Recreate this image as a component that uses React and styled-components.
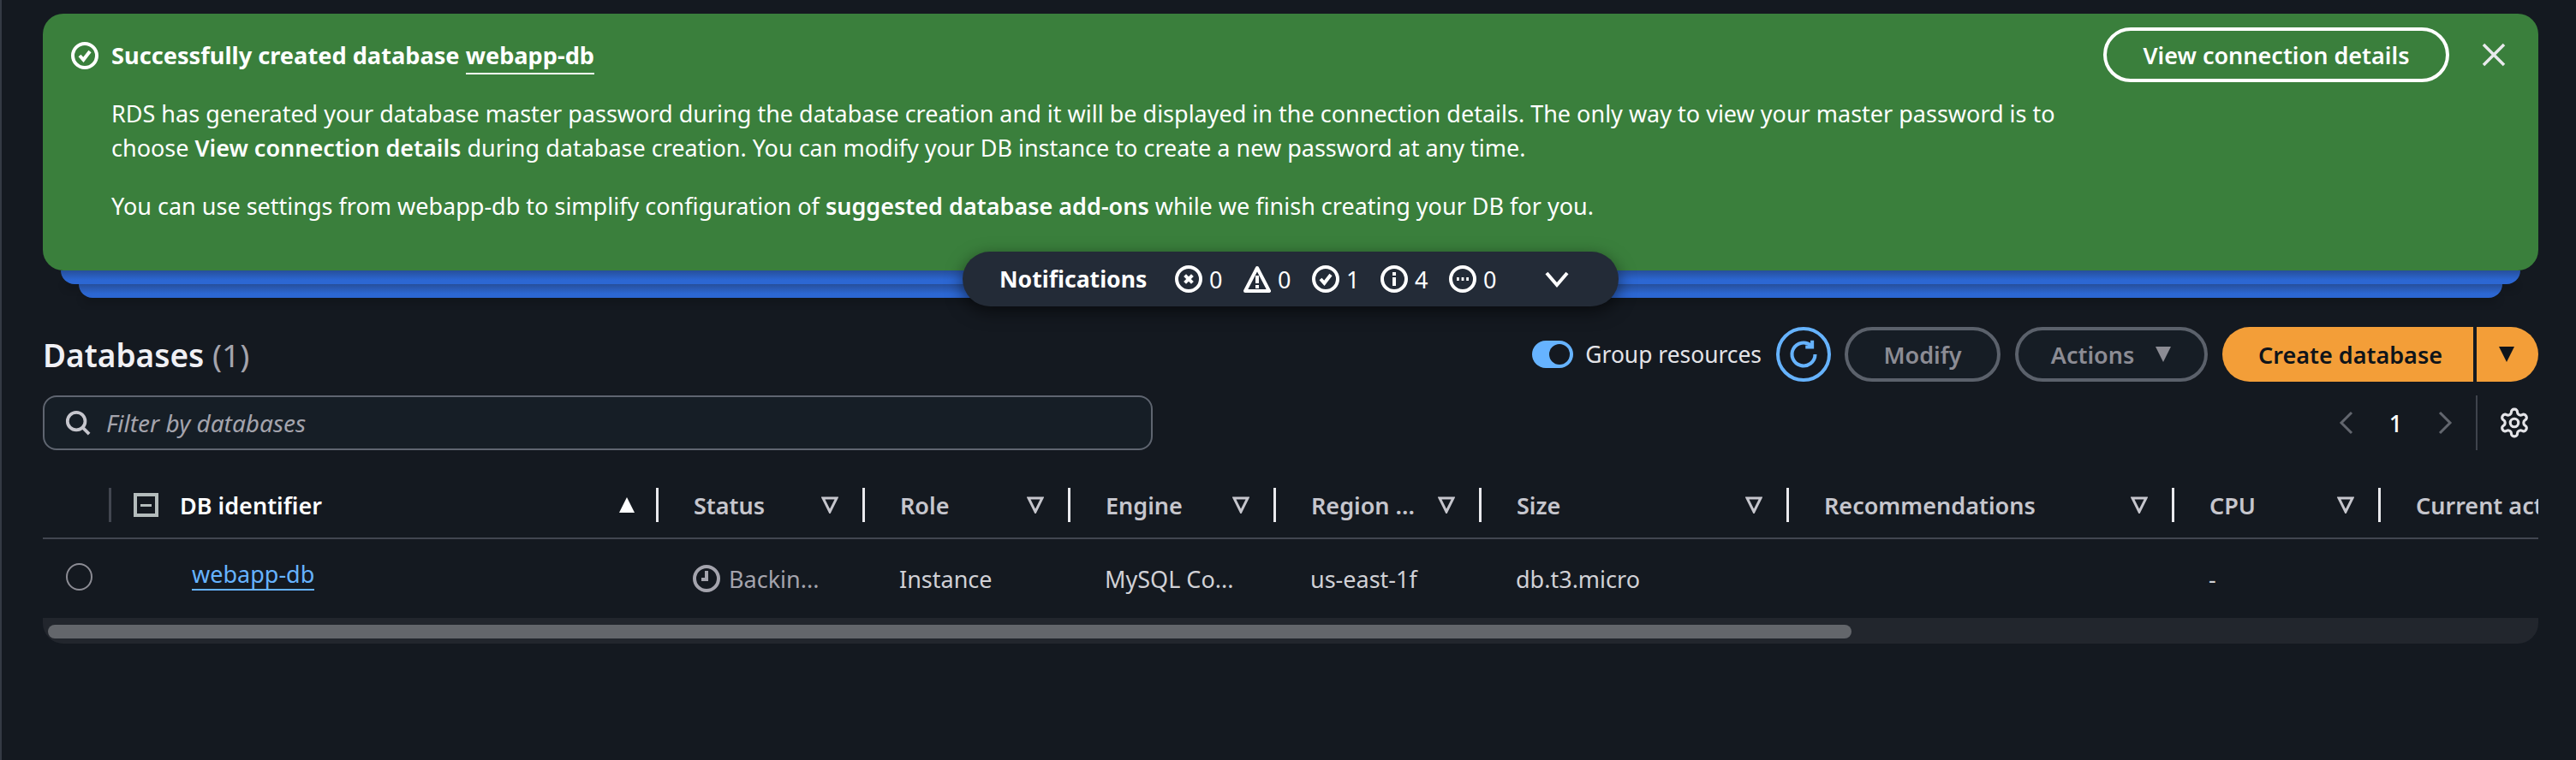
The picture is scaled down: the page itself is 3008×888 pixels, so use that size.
import React from 'react';
import styled, { createGlobalStyle } from 'styled-components';

const GlobalStyle = createGlobalStyle`
  html, body {
    margin: 0;
    background: #141920;
  }
  body {
    font-family: "Noto Sans", "Open Sans", sans-serif;
    font-size: 27px;
    color: #fff;
  }
  * { box-sizing: border-box; }
  b { font-weight: 600; }
`

const Page = styled.div`
  width: 3008px;
  height: 888px;
  overflow: hidden;
  padding: 16px 44px 0 48px;
  border-left: 2px solid #343a44;
  background: #141920;
`
const FlashStack = styled.div`
  position: relative;
`
const Banner = styled.div`
  height: 300px;
  padding: 16px 38px 0 33px;
  display: flex;
  justify-content: space-between;
  background: #3a7f3c;
  border-radius: 24px;
  position: relative;
`
const BannerMain = styled.div`
  display: flex;
  gap: 15px;
  padding-top: 17px;
`
const BannerBody = styled.div`
  width: 2300px;
`
const BannerTitle = styled.div`
  font-size: 27.2px;
  font-weight: 700;
  line-height: 32px;
  margin-bottom: 32px;
`
const TitleLink = styled.span`
  border-bottom: 2px solid #fff;
  padding-bottom: 2px;
`
const BannerText = styled.p`
  margin: 0 0 28px;
  line-height: 40px;
`
const BannerActions = styled.div`
  display: flex;
  align-items: flex-start;
  gap: 38px;
`
const OutlineButton = styled.div`
  width: 404px;
  height: 64px;
  border: 4px solid #fff;
  border-radius: 32px;
  display: flex;
  align-items: center;
  justify-content: center;
  font-weight: 600;
`
const CloseIcon = styled.svg`
  width: 28px;
  height: 28px;
  margin-top: 18px;
  color: #e9e9ed;
`
const StackLayer = styled.div`
  height: 16px;
  margin: 0 ${p => p.$inset}px;
  border-radius: 0 0 16px 16px;
  background: linear-gradient(#264f9b, #2c67d3 70%);
  box-shadow: 0 10px 10px -6px rgba(0, 0, 0, 0.35);
`
const NotificationBar = styled.div`
  position: absolute;
  top: 278px;
  left: 50%;
  transform: translateX(-50%);
  width: 766px;
  height: 64px;
  padding-left: 43px;
  display: flex;
  align-items: center;
  background: #232b37;
  border-radius: 32px;
  box-shadow: 0 6px 20px rgba(0, 0, 0, 0.55);
`
const NotificationLabel = styled.span`
  font-size: 26.6px;
  font-weight: 700;
  width: 205px;
  white-space: nowrap;
`
const Counter = styled.span`
  display: flex;
  align-items: center;
  gap: 8px;
  width: 80px;
`
const ExpandIcon = styled.svg`
  width: 28px;
  height: 28px;
`
const Spacer = styled.span`
  width: 32px;
`
const Toolbar = styled.div`
  margin-top: 34px;
  height: 64px;
  display: flex;
  align-items: center;
`
const Heading = styled.h2`
  margin: 0 auto 0 0;
  font-size: 37px;
  font-weight: 600;
  color: #f0f0f4;
`
const HeadingCount = styled.span`
  font-weight: 400;
  color: #a4a4ad;
`
const Toggle = styled.span`
  width: 48px;
  height: 32px;
  border-radius: 16px;
  background: #66b3ff;
  display: flex;
  align-items: center;
  justify-content: flex-end;
  padding-right: 4px;
`
const ToggleKnob = styled.span`
  width: 24px;
  height: 24px;
  border-radius: 50%;
  background: #141920;
`
const ToggleLabel = styled.span`
  margin: 0 17px 0 14px;
  color: #e4e4e8;
  font-size: 26.4px;
`
const RoundButton = styled.div`
  width: 64px;
  height: 64px;
  border: 4px solid #66b3ff;
  border-radius: 50%;
  display: flex;
  align-items: center;
  justify-content: center;
  color: #66b3ff;
  margin-right: 16px;
`
const DisabledButton = styled.div`
  width: ${p => p.$width}px;
  height: 64px;
  margin-right: 17px;
  border: 4px solid #5b616b;
  border-radius: 32px;
  display: flex;
  align-items: center;
  justify-content: center;
  gap: 24px;
  color: #8c8c94;
  font-weight: 600;
  background: #161d25;
`
const SplitButton = styled.div`
  width: 369px;
  height: 64px;
  display: flex;
  color: #0f141a;
  font-weight: 600;
`
const SplitMain = styled.div`
  width: 293px;
  padding-left: 6px;
  background: #f39e38;
  border-radius: 32px 0 0 32px;
  display: flex;
  align-items: center;
  justify-content: center;
`
const SplitArrow = styled.div`
  flex: 1;
  margin-left: 4px;
  padding-right: 2px;
  background: #f39e38;
  border-radius: 0 32px 32px 0;
  display: flex;
  align-items: center;
  justify-content: center;
`
const FilterRow = styled.div`
  margin-top: 16px;
  height: 64px;
  display: flex;
  align-items: center;
  justify-content: space-between;
`
const FilterInput = styled.div`
  width: 1296px;
  height: 64px;
  border: 2px solid #5f6570;
  border-radius: 16px;
  background: #161e26;
  padding-left: 24px;
  display: flex;
  align-items: center;
  gap: 18px;
  color: #a4a4ad;
  font-size: 28px;
  font-style: italic;
`
const Pager = styled.div`
  display: flex;
  align-items: center;
  height: 64px;
  margin-right: 9px;
`
const PagerArrow = styled.svg`
  width: 20px;
  height: 28px;
  color: #62666e;
`
const PageNumber = styled.span`
  width: 95px;
  text-align: center;
  font-weight: 500;
`
const PagerSplit = styled.span`
  width: 2px;
  height: 64px;
  margin: 0 24px 0 26px;
  background: #3f444d;
`
const Table = styled.div`
  margin-top: 44px;
  overflow: hidden;
`
const Row = styled.div`
  display: grid;
  grid-template-columns: 80px 639px 241px 240px 240px 240px 359px 450px 241px 400px;
  width: 2914px;
`
const HeadRow = styled(Row)`
  height: 60px;
  border-bottom: 2px solid #424650;
  padding-bottom: 18px;
`
const HeadCell = styled.div`
  height: 40px;
  display: flex;
  align-items: center;
  justify-content: space-between;
  padding: 0 ${p => (p.$first ? 24 : 28)}px 0 ${p => (p.$first ? 80 : 41)}px;
  border-right: 3px solid ${p => (p.$dim ? '#424650' : '#e9e9ed')};
  color: ${p => (p.$active ? '#fff' : '#c6c6cd')};
  font-weight: 600;
  white-space: nowrap;
  overflow: hidden;
  position: relative;
`
const SelectAll = styled.span`
  position: absolute;
  left: 26px;
  top: 6px;
  width: 29px;
  height: 28px;
  border: 4px solid #b4bcbc;
  display: flex;
  align-items: center;
  justify-content: center;
  &::after {
    content: '';
    width: 13px;
    height: 3px;
    background: #b4bcbc;
  }
`
const SelectHead = styled(HeadCell)`
  padding: 0;
  border-color: #424650;
`
const BodyRow = styled(Row)`
  height: 92px;
  align-items: center;
  color: #d1d1d6;
`
const BodyCell = styled.div`
  padding-left: ${p => p.$pad || 40}px;
  display: flex;
  align-items: center;
  gap: 10px;
  white-space: nowrap;
  color: ${p => p.$muted ? '#a4a4ad' : 'inherit'};
`
const Radio = styled.span`
  width: 31px;
  height: 32px;
  margin-left: 26px;
  margin-top: -4px;
  border: 2px solid #8c8c94;
  border-radius: 50%;
`
const DbLink = styled.span`
  color: #66b3ff;
  border-bottom: 2px solid #66b3ff;
  line-height: 34px;
  margin-top: -8px;
`
const ScrollTrack = styled.div`
  height: 30px;
  padding: 8px 0 0 6px;
  background: #22262d;
  border-radius: 0 0 24px 24px;
`
const ScrollThumb = styled.div`
  width: 2106px;
  height: 16px;
  border-radius: 8px;
  background: #63666b;
`

const StatusIcon = ({ children }) => (
  <svg width="32" height="32" viewBox="0 0 16 16" fill="none" stroke="currentColor" strokeWidth="2">
    {children}
  </svg>
)

const UpTriangle = () => (
  <svg width="20" height="20" viewBox="0 0 20 20">
    <path d="M10 1 L19 19 L1 19 Z" fill="#fff" />
  </svg>
)

const DownTriangle = ({ color }) => (
  <svg width="20" height="20" viewBox="0 0 20 20">
    <path d="M1 1 H19 L10 19 Z" fill={color} />
  </svg>
)

const FilterArrow = () => (
  <svg width="20" height="20" viewBox="0 0 20 20" style={{ flexShrink: 0 }}>
    <path d="M2 2 H18 L10 18 Z" fill="none" stroke="#c6c6cd" strokeWidth="3" />
  </svg>
)

const columns = [
  { label: 'Status' },
  { label: 'Role' },
  { label: 'Engine' },
  { label: 'Region ...' },
  { label: 'Size' },
  { label: 'Recommendations' },
  { label: 'CPU' },
  { label: 'Current activity', clipped: true },
]

const counters = [
  { n: 0, icon: <><circle cx="8" cy="8" r="7" /><path d="M5.8 5.8l4.4 4.4M10.2 5.8l-4.4 4.4" /></> },
  { n: 0, icon: <><path d="M8 1.5 L15 15 H1 Z" strokeLinejoin="round" /><path d="M8 6v4.5M8 11.5v2" /></> },
  { n: 1, icon: <><circle cx="8" cy="8" r="7" /><path d="M5 8l2.2 2.4L11 5.5" /></> },
  { n: 4, icon: <><circle cx="8" cy="8" r="7" /><path d="M8 7v5M8 4v2" /></> },
  { n: 0, icon: <><circle cx="8" cy="8" r="7" /><path d="M4.5 8h1.4M7.3 8h1.4M10.1 8h1.4" /></> },
]

function App() {
  return (
    <Page>
      <GlobalStyle />
      <FlashStack>
        <Banner>
          <BannerMain>
            <StatusIcon>
              <circle cx="8" cy="8" r="7" />
              <path d="M5 8l2.2 2.4L11 5.5" />
            </StatusIcon>
            <BannerBody>
              <BannerTitle>Successfully created database <TitleLink>webapp-db</TitleLink></BannerTitle>
              <BannerText>
                RDS has generated your database master password during the database creation and it will be displayed in the connection details. The only way to view your master password is to choose <b>View connection details</b> during database creation. You can modify your DB instance to create a new password at any time.
              </BannerText>
              <BannerText>
                You can use settings from webapp-db to simplify configuration of <b>suggested database add-ons</b> while we finish creating your DB for you.
              </BannerText>
            </BannerBody>
          </BannerMain>
          <BannerActions>
            <OutlineButton>View connection details</OutlineButton>
            <CloseIcon viewBox="0 0 28 28" fill="none" stroke="currentColor" strokeWidth="3.5">
              <path d="M2 2l24 24M26 2L2 26" />
            </CloseIcon>
          </BannerActions>
        </Banner>
        <StackLayer $inset={21} />
        <StackLayer $inset={42} />
        <NotificationBar>
          <NotificationLabel>Notifications</NotificationLabel>
          {counters.map((c, i) => (
            <Counter key={i}>
              <StatusIcon>{c.icon}</StatusIcon>
              {c.n}
            </Counter>
          ))}
          <Spacer />
          <ExpandIcon viewBox="0 0 28 28" fill="none" stroke="#fff" strokeWidth="4">
            <path d="M2 7l12 14L26 7" />
          </ExpandIcon>
        </NotificationBar>
      </FlashStack>

      <Toolbar>
        <Heading>Databases <HeadingCount>(1)</HeadingCount></Heading>
        <Toggle><ToggleKnob /></Toggle>
        <ToggleLabel>Group resources</ToggleLabel>
        <RoundButton>
          <svg width="36" height="36" viewBox="0 0 16 16" fill="none" stroke="currentColor" strokeWidth="1.8">
            <path d="M14 8a6 6 0 1 1-2-4.5" />
            <path d="M12.5 0.8v3.4H9" />
          </svg>
        </RoundButton>
        <DisabledButton $width={182}>Modify</DisabledButton>
        <DisabledButton $width={225}>Actions <DownTriangle color="#8c8c94" /></DisabledButton>
        <SplitButton>
          <SplitMain>Create database</SplitMain>
          <SplitArrow>
            <DownTriangle color="#0f141a" />
          </SplitArrow>
        </SplitButton>
      </Toolbar>

      <FilterRow>
        <FilterInput>
          <svg width="30" height="30" viewBox="0 0 16 16" fill="none" stroke="#c6c6cd" strokeWidth="2">
            <circle cx="7" cy="7" r="5.5" />
            <path d="M11 11l4 4" />
          </svg>
          Filter by databases
        </FilterInput>
        <Pager>
          <PagerArrow viewBox="0 0 20 28" fill="none" stroke="currentColor" strokeWidth="3"><path d="M16 2L4 14l12 12" /></PagerArrow>
          <PageNumber>1</PageNumber>
          <PagerArrow viewBox="0 0 20 28" fill="none" stroke="currentColor" strokeWidth="3"><path d="M4 2l12 12L4 26" /></PagerArrow>
          <PagerSplit />
          <svg width="38" height="38" viewBox="0 0 24 24" fill="none" stroke="#e4e4e8" strokeWidth="2" strokeLinecap="round" strokeLinejoin="round">
            <path d="M12.22 2h-.44a2 2 0 0 0-2 2v.18a2 2 0 0 1-1 1.73l-.43.25a2 2 0 0 1-2 0l-.15-.08a2 2 0 0 0-2.73.73l-.22.38a2 2 0 0 0 .73 2.73l.15.1a2 2 0 0 1 1 1.72v.51a2 2 0 0 1-1 1.74l-.15.09a2 2 0 0 0-.73 2.73l.22.38a2 2 0 0 0 2.73.73l.15-.08a2 2 0 0 1 2 0l.43.25a2 2 0 0 1 1 1.73V20a2 2 0 0 0 2 2h.44a2 2 0 0 0 2-2v-.18a2 2 0 0 1 1-1.73l.43-.25a2 2 0 0 1 2 0l.15.08a2 2 0 0 0 2.73-.73l.22-.39a2 2 0 0 0-.73-2.73l-.15-.08a2 2 0 0 1-1-1.74v-.5a2 2 0 0 1 1-1.74l.15-.09a2 2 0 0 0 .73-2.73l-.22-.38a2 2 0 0 0-2.73-.73l-.15.08a2 2 0 0 1-2 0l-.43-.25a2 2 0 0 1-1-1.73V4a2 2 0 0 0-2-2z" />
            <circle cx="12" cy="12" r="3" />
          </svg>
        </Pager>
      </FilterRow>

      <Table>
        <HeadRow>
          <SelectHead $dim />
          <HeadCell $first $active>
            <SelectAll />
            DB identifier
            <UpTriangle />
          </HeadCell>
          {columns.map(col => (
            <HeadCell key={col.label} style={col.clipped ? { borderRight: 'none' } : undefined}>
              {col.label}
              {!col.clipped && <FilterArrow />}
            </HeadCell>
          ))}
        </HeadRow>
        <BodyRow>
          <BodyCell $pad={1}><Radio /></BodyCell>
          <BodyCell $pad={94}><DbLink>webapp-db</DbLink></BodyCell>
          <BodyCell $muted>
            <StatusIcon>
              <circle cx="8" cy="8" r="7" />
              <path d="M8 3.5V8.5H5" />
            </StatusIcon>
            Backin...
          </BodyCell>
          <BodyCell>Instance</BodyCell>
          <BodyCell>MySQL Co...</BodyCell>
          <BodyCell>us-east-1f</BodyCell>
          <BodyCell>db.t3.micro</BodyCell>
          <BodyCell />
          <BodyCell>-</BodyCell>
          <BodyCell />
        </BodyRow>
        <ScrollTrack>
          <ScrollThumb />
        </ScrollTrack>
      </Table>
    </Page>
  );
}

export default App;
